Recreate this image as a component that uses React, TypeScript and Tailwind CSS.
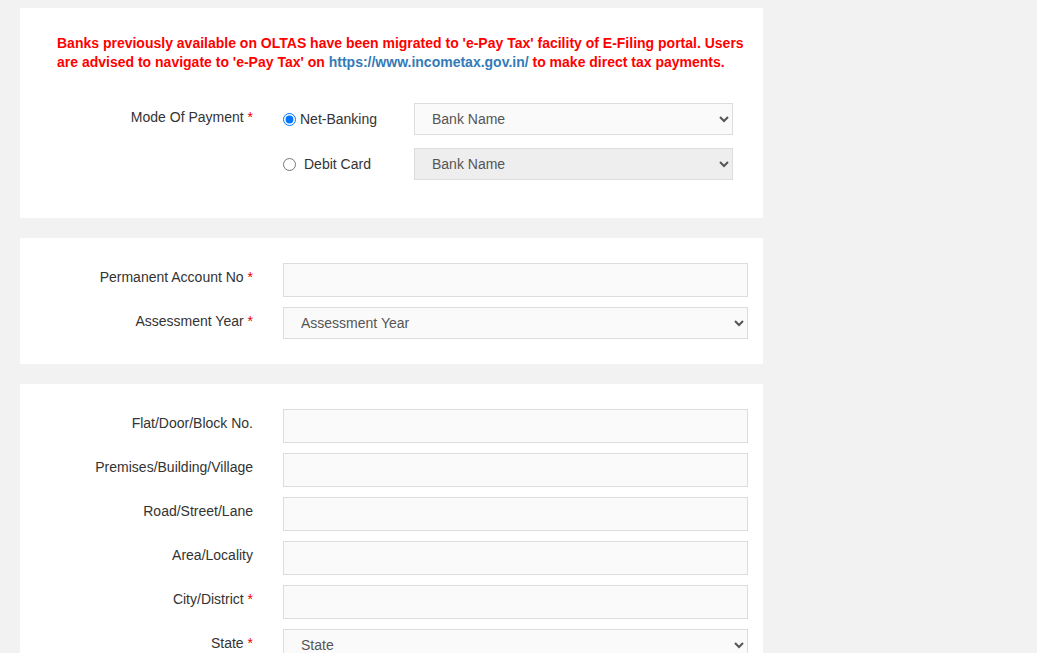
import React from "react";

const Label = ({ text, req }: { text: string; req?: boolean }) => (
  <div className="w-[233px] shrink-0 text-right pt-[4px] leading-[20px] text-[14px] text-[#333]">
    {text}
    {req && <span className="text-[#e00]"> *</span>}
  </div>
);

const TextRow = ({ text, req }: { text: string; req?: boolean }) => (
  <div className="flex">
    <Label text={text} req={req} />
    <input
      type="text"
      className="ml-[30px] w-[465px] h-[34px] border border-[#dddddd] bg-[#fafafa] outline-none px-[12px] text-[14px]"
    />
  </div>
);

const SelectRow = ({ text, req, placeholder }: { text: string; req?: boolean; placeholder: string }) => (
  <div className="flex">
    <Label text={text} req={req} />
    <select
      defaultValue=""
      className="ml-[30px] w-[465px] h-[32px] border border-[#dddddd] bg-[#fafafa] pl-[13px] pr-[6px] text-[14px] text-[#555]"
    >
      <option value="">{placeholder}</option>
    </select>
  </div>
);

export default function App() {
  return (
    <div
      className="min-h-screen bg-[#f2f2f2] pt-[8px] pl-[20px] pb-[40px]"
      style={{ fontFamily: '"Liberation Sans", Arial, sans-serif' }}
    >
      <div className="w-[743px] bg-white pt-[26px] pb-[38px]">
        <p className="pl-[37px] text-[14px] leading-[19px] font-bold text-[#ff0000]">
          Banks previously available on OLTAS have been migrated to 'e-Pay Tax' facility of E-Filing portal. Users
          <br />
          are advised to navigate to 'e-Pay Tax' on{" "}
          <a className="text-[#337ab7]" href="#">
            https://www.incometax.gov.in/
          </a>{" "}
          to make direct tax payments.
        </p>
        <div className="mt-[31px] flex flex-col gap-[13px]">
          <div className="flex">
            <Label text="Mode Of Payment" req />
            <label className="ml-[30px] w-[131px] shrink-0 flex items-center h-[32px] text-[14px] text-[#333]">
              <input type="radio" name="mode" defaultChecked className="m-0 w-[13px] h-[13px]" />
              <span className="ml-[4px]">Net-Banking</span>
            </label>
            <select
              defaultValue=""
              className="w-[319px] h-[32px] border border-[#dddddd] bg-[#fafafa] pl-[13px] pr-[6px] text-[14px] text-[#555]"
            >
              <option value="">Bank Name</option>
            </select>
          </div>
          <div className="flex">
            <div className="w-[233px] shrink-0" />
            <label className="ml-[30px] w-[131px] shrink-0 flex items-center h-[32px] text-[14px] text-[#333]">
              <input type="radio" name="mode" className="m-0 w-[13px] h-[13px]" />
              <span className="ml-[8px]">Debit Card</span>
            </label>
            <select
              defaultValue=""
              disabled
              className="w-[319px] h-[32px] border border-[#dddddd] bg-[#eeeeee] pl-[13px] pr-[6px] text-[14px] text-[#555] opacity-100"
            >
              <option value="">Bank Name</option>
            </select>
          </div>
        </div>
      </div>

      <div className="mt-[20px] w-[743px] bg-white py-[25px] flex flex-col gap-[10px]">
        <TextRow text="Permanent Account No" req />
        <SelectRow text="Assessment Year" req placeholder="Assessment Year" />
      </div>

      <div className="mt-[20px] w-[743px] bg-white py-[25px] flex flex-col gap-[10px]">
        <TextRow text="Flat/Door/Block No." />
        <TextRow text="Premises/Building/Village" />
        <TextRow text="Road/Street/Lane" />
        <TextRow text="Area/Locality" />
        <TextRow text="City/District" req />
        <SelectRow text="State" req placeholder="State" />
        <TextRow text="PIN" req />
      </div>
    </div>
  );
}
